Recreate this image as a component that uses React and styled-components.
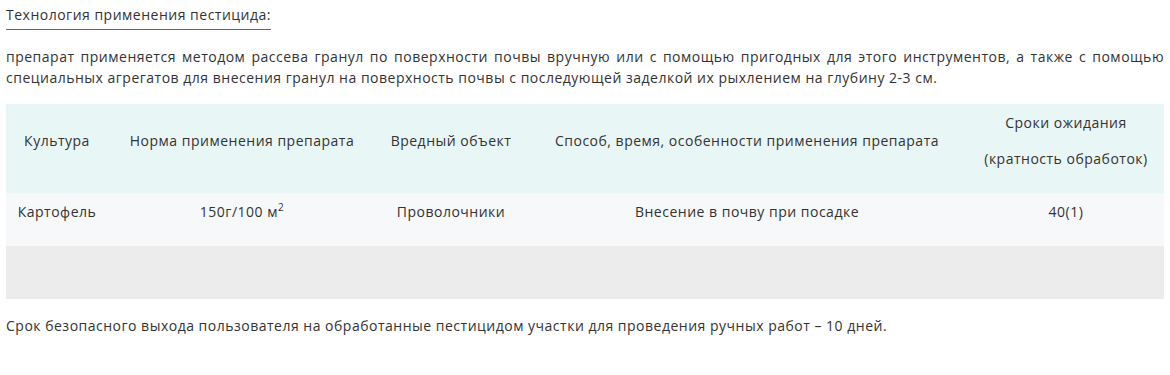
import React from "react";
import styled, { createGlobalStyle } from "styled-components";

const Global = createGlobalStyle`
  html, body { margin: 0; padding: 0; background: #ffffff; }
  body { font-family: "Open Sans", "Liberation Sans", sans-serif; color: #333333; font-size: 14px; letter-spacing: 0.5px; }
  * { box-sizing: border-box; }
`;

const Page = styled.div`
  padding: 4px 6px 0;
  width: 1170px;
`;

const HeadingWrap = styled.div`
  margin-bottom: 16px;
`;

const Heading = styled.span`
  display: inline-block;
  font-size: 14px;
  line-height: 22px;
  padding-bottom: 3px;
  border-bottom: 1px solid #4d6c84;
  color: #333333;
`;

const Text = styled.p`
  margin: 0;
  font-size: 14px;
  line-height: 21px;
  text-align: ${(p) => (p.$justify ? "justify" : "left")};
  color: #333333;
`;

const Table = styled.table`
  width: 100%;
  border-collapse: collapse;
  table-layout: fixed;
  margin: 16px 0 16px;
`;

const Row = styled.tr`
  background: ${(p) => p.$bg};
  height: ${(p) => p.$h}px;
`;

const Cell = styled.td`
  padding: 8px 10px 9px;
  text-align: center;
  vertical-align: middle;
  font-size: 14px;
  line-height: 22px;
  color: #333333;
  p { margin: 0 0 14px; }
  sup { font-size: 10px; line-height: 0; vertical-align: 6px; }
`;

const cols = [102, 268, 150, 442, 196];

export default function App() {
  return (
    <Page>
      <Global />
      <HeadingWrap>
        <Heading>Технология применения пестицида:</Heading>
      </HeadingWrap>
      <Text $justify>
        препарат применяется методом рассева гранул по поверхности почвы вручную или с помощью пригодных для этого инструментов, а также с помощью специальных агрегатов для внесения гранул на поверхность почвы с последующей заделкой их рыхлением на глубину 2-3 см.
      </Text>
      <Table>
        <colgroup>
          {cols.map((w, i) => (
            <col key={i} style={{ width: w }} />
          ))}
        </colgroup>
        <tbody>
          <Row $bg="#e9f6f6" $h={89}>
            <Cell><p>Культура</p></Cell>
            <Cell><p>Норма применения препарата</p></Cell>
            <Cell><p>Вредный объект</p></Cell>
            <Cell><p>Способ, время, особенности применения препарата</p></Cell>
            <Cell><p>Сроки ожидания</p><p>(кратность обработок)</p></Cell>
          </Row>
          <Row $bg="#f6f8fa" $h={53}>
            <Cell><p>Картофель</p></Cell>
            <Cell><p>150г/100 м<sup>2</sup></p></Cell>
            <Cell><p>Проволочники</p></Cell>
            <Cell><p>Внесение в почву при посадке</p></Cell>
            <Cell><p>40(1)</p></Cell>
          </Row>
          <Row $bg="#ececec" $h={53}>
            <Cell /><Cell /><Cell /><Cell /><Cell />
          </Row>
        </tbody>
      </Table>
      <Text>
        Срок безопасного выхода пользователя на обработанные пестицидом участки для проведения ручных работ – 10 дней.
      </Text>
    </Page>
  );
}
